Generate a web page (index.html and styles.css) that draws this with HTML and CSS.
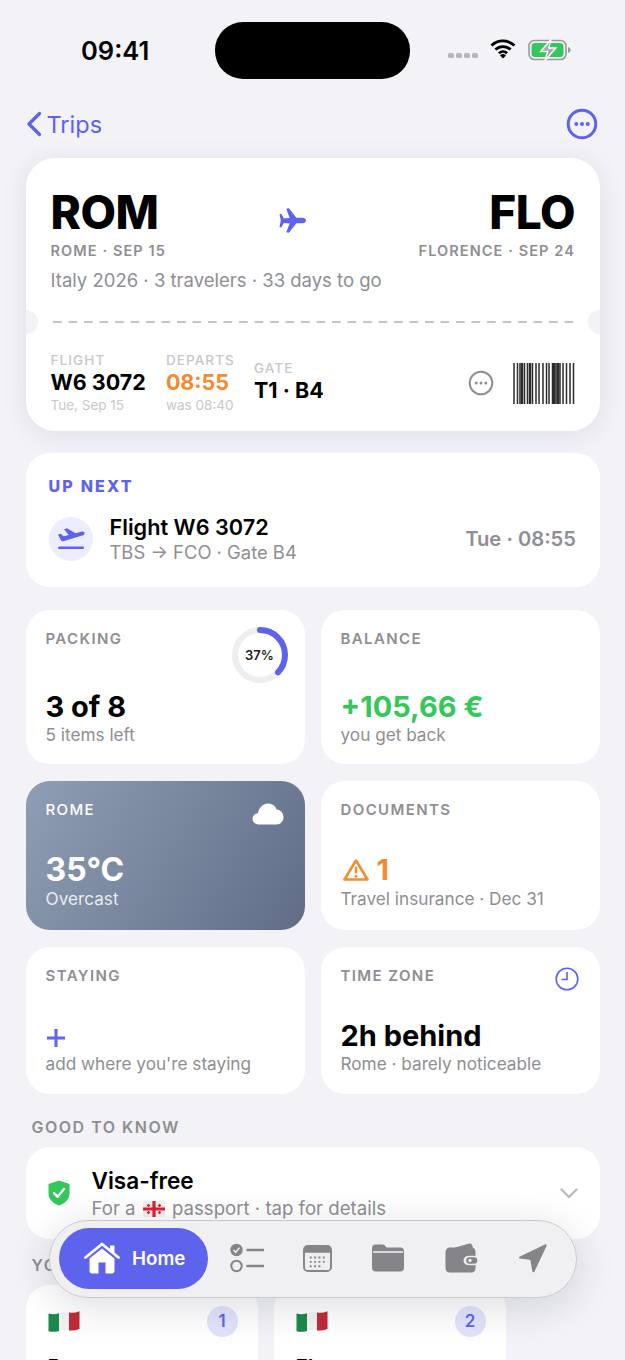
FILE: index.html
```html
<!DOCTYPE html>
<html>
<head>
<title>Italy 2026</title>
<meta name="viewport" content="width=device-width, initial-scale=1.0"/>
<meta charset="UTF-8"/>
<link rel="stylesheet" href="styles.css">
</head>
<body>
<div class="screen">
	<!-- status bar -->
	<div class="statusBar">
		<div class="statusTime">09:41</div>
		<div class="island"></div>
		<div class="statusIcons">
			<div class="signal"><i></i><i></i><i></i><i></i></div>
			<svg class="wifi" width="26" height="20" viewBox="0 0 26 20"><path d="M1.5 6.6a16.5 16.5 0 0 1 23 0M5.4 10.6a11 11 0 0 1 15.2 0M9 14.3a5.8 5.8 0 0 1 8 0" fill="none" stroke="#000" stroke-width="2.8"/><path d="M13 19.6l-3-3.2a4.3 4.3 0 0 1 6 0z" fill="#000"/></svg>
			<svg class="battery" width="43" height="22" viewBox="0 0 43 22"><rect x="1" y="1.5" width="37" height="19" rx="5.5" fill="none" stroke="#9a9a9e" stroke-width="1.6"/><rect x="3.5" y="4" width="32" height="14" rx="3.5" fill="#34c759"/><path d="M40 8v6c1.6-.5 2.6-1.6 2.6-3s-1-2.500-2.600-3z" fill="#9a9a9e"/><path d="M23 0.500L12.500 12.500h7L17 21.500 28 9h-7.200z" fill="#a9adb0" stroke="#fff" stroke-width="1.300"/></svg>
		</div>
	</div>

	<!-- nav -->
	<div class="navBar">
		<div class="navBack">
			<svg width="16" height="26" viewBox="0 0 16 26"><path d="M13.500 2.500L3 13l10.500 10.500" fill="none" stroke="#5e63ee" stroke-width="3.200" stroke-linecap="round" stroke-linejoin="round"/></svg>
			<span>Trips</span>
		</div>
		<svg class="navMore" width="32" height="32" viewBox="0 0 32 32"><circle cx="16" cy="16" r="13.800" fill="none" stroke="#5e63ee" stroke-width="3"/><circle cx="10.300" cy="16" r="2" fill="#5e63ee"/><circle cx="16" cy="16" r="2" fill="#5e63ee"/><circle cx="21.700" cy="16" r="2" fill="#5e63ee"/></svg>
	</div>

	<!-- ticket -->
	<div class="ticket">
		<div class="ticketRoute">
			<div class="routeEnd">
				<div class="routeCode">ROM</div>
				<div class="routeCity">ROME · SEP 15</div>
			</div>
			<svg class="routePlane" width="27" height="25" viewBox="0 0 28 26"><path d="M0.500 6.500l1.800-.4 2.700 4.700 6-.3L7.500 0.800 10.300 0.300 18 10.200l6.500-.1c2 0 3.500 1.300 3.500 2.900s-1.500 2.900-3.500 2.900L18 15.800l-7.700 9.900-2.800-.5 3.500-9.200-6-.3-2.700 4.700-1.800-.4L1.800 13z" fill="#5e63ee"/></svg>
			<div class="routeEnd routeEndRight">
				<div class="routeCode">FLO</div>
				<div class="routeCity">FLORENCE · SEP 24</div>
			</div>
		</div>
		<div class="ticketMeta">Italy 2026 · 3 travelers · 33 days to go</div>
		<div class="ticketTear"></div>
		<div class="ticketInfo">
			<div class="infoCol">
				<div class="infoLabel">FLIGHT</div>
				<div class="infoValue">W6 3072</div>
				<div class="infoNote">Tue, Sep 15</div>
			</div>
			<div class="infoCol">
				<div class="infoLabel">DEPARTS</div>
				<div class="infoValue infoValueLate">08:55</div>
				<div class="infoNote">was 08:40</div>
			</div>
			<div class="infoCol infoColGate">
				<div class="infoLabel">GATE</div>
				<div class="infoValue">T1 · B4</div>
			</div>
			<svg class="infoMore" width="26" height="26" viewBox="0 0 26 26"><circle cx="13" cy="13" r="11.300" fill="none" stroke="#8e8e93" stroke-width="2"/><circle cx="8.200" cy="13" r="1.500" fill="#8e8e93"/><circle cx="13" cy="13" r="1.500" fill="#8e8e93"/><circle cx="17.800" cy="13" r="1.500" fill="#8e8e93"/></svg>
			<svg class="barcode" width="62" height="41" viewBox="0 0 62 41"><path d="M1 0v41M4.500 0v41M7 0v41M11.500 0v41M14.500 0v41M19.500 0v41M23 0v41M26 0v41M30 0v41M33.500 0v41M36 0v41M39.500 0v41M43 0v41M47 0v41M50 0v41M53.500 0v41M57 0v41M60.500 0v41" fill="none" stroke="#2c2c2e" stroke-width="1.500"/><path d="M9 0v41M17 0v41M41 0v41M45 0v41" fill="none" stroke="#2c2c2e" stroke-width="2.500"/></svg>
		</div>
	</div>

	<!-- up next -->
	<div class="card upNext">
		<div class="upNextLabel">UP NEXT</div>
		<div class="upNextRow">
			<div class="upNextIcon">
				<svg width="28" height="24" viewBox="0 0 28 24"><path d="M1 7.500l2.700-.8 3 2.600 5-1.300L7 2.200 10 1.300l8.500 5 5.700-1.600c1.600-.4 3 .2 3.300 1.300.3 1.100-.6 2.100-2.200 2.600L6.300 14.200c-.9.200-1.700 0-2.300-.7z" fill="#5e63ee"/><rect x="1" y="19.500" width="26" height="2.500" rx="1.200" fill="#5e63ee"/></svg>
			</div>
			<div class="upNextText">
				<div class="upNextTitle">Flight W6 3072</div>
				<div class="upNextSub">TBS → FCO · Gate B4</div>
			</div>
			<div class="upNextTime">Tue · 08:55</div>
		</div>
	</div>

	<!-- tiles -->
	<div class="tiles">
		<div class="card tile tileTall">
			<div class="tileLabel">PACKING</div>
			<div class="tileRing">
				<svg width="58" height="58" viewBox="0 0 58 58"><circle cx="29" cy="29" r="25" fill="none" stroke="#eeeeef" stroke-width="6"/><circle cx="29" cy="29" r="25" fill="none" stroke="#5e63ee" stroke-width="6" stroke-linecap="round" stroke-dasharray="58.100 157.100" transform="rotate(-90 29 29)"/></svg>
				<span>37%</span>
			</div>
			<div class="tileValue">3 of 8</div>
			<div class="tileSub">5 items left</div>
		</div>
		<div class="card tile tileTall">
			<div class="tileLabel">BALANCE</div>
			<div class="tileValue tileValueGreen">+105,66 €</div>
			<div class="tileSub">you get back</div>
		</div>
		<div class="tile tileFlat tileWeather">
			<div class="tileLabel">ROME</div>
			<svg class="tileCorner" width="32" height="22" viewBox="0 0 32 22"><path d="M7 21.500C3 21.500 0.500 19 0.500 15.800c0-3 2.200-5.300 5.300-5.600C7 4.500 11.300 0.500 16 0.500c4 0 7.300 2.300 8.700 6C29 7 31.500 10.300 31.500 14.300c0 4-3 7.200-7 7.200z" fill="#fff"/></svg>
			<div class="tileValue">35°C</div>
			<div class="tileSub">Overcast</div>
		</div>
		<div class="card tile tileFlat">
			<div class="tileLabel">DOCUMENTS</div>
			<div class="tileValue tileValueOrange">
				<svg width="26" height="24" viewBox="0 0 26 24"><path d="M13 2.500L24.500 21.500h-23z" fill="none" stroke="#f58a2e" stroke-width="2.600" stroke-linejoin="round"/><rect x="11.800" y="8.500" width="2.400" height="7" rx="1.200" fill="#f58a2e"/><circle cx="13" cy="18.200" r="1.500" fill="#f58a2e"/></svg>
				<span>1</span>
			</div>
			<div class="tileSub">Travel insurance · Dec 31</div>
		</div>
		<div class="card tile">
			<div class="tileLabel">STAYING</div>
			<svg class="tilePlus" width="20" height="20" viewBox="0 0 20 20"><path d="M10 1v18M1 10h18" fill="none" stroke="#5e63ee" stroke-width="3"/></svg>
			<div class="tileSub">add where you're staying</div>
		</div>
		<div class="card tile">
			<div class="tileLabel">TIME ZONE</div>
			<svg class="tileCorner tileClock" width="24" height="24" viewBox="0 0 24 24"><circle cx="12" cy="12" r="10.800" fill="none" stroke="#5e63ee" stroke-width="1.600"/><path d="M12 5v7.500H6.500" fill="none" stroke="#5e63ee" stroke-width="1.600"/></svg>
			<div class="tileValue">2h behind</div>
			<div class="tileSub">Rome · barely noticeable</div>
		</div>
	</div>

	<!-- good to know -->
	<div class="sectionLabel">GOOD TO KNOW</div>
	<div class="card visa">
		<svg width="22" height="26" viewBox="0 0 22 26"><path d="M11 0.500L21.500 4v9.500c0 5.500-4.300 9.800-10.500 12C4.800 23.300 0.500 19 0.500 13.500V4z" fill="#34c759"/><path d="M6 13l3.600 3.800L16 9" fill="none" stroke="#fff" stroke-width="2.400" stroke-linecap="round" stroke-linejoin="round"/></svg>
		<div class="visaText">
			<div class="visaTitle">Visa-free</div>
			<div class="visaSub">For a
				<svg class="visaFlag" width="22" height="16" viewBox="0 0 22 16"><rect width="22" height="16" rx="2" fill="#f4f0f0"/><path d="M11 0v16M0 8h22" stroke="#d8232f" stroke-width="3.200"/><path d="M5.500 3v3M4 4.500h3M16.500 3v3M15 4.500h3M5.500 10v3M4 11.500h3M16.500 10v3M15 11.500h3" stroke="#d8232f" stroke-width="1.300"/></svg>
				passport · tap for details</div>
		</div>
		<svg class="visaChevron" width="18" height="11" viewBox="0 0 18 11"><path d="M1.500 1.500L9 9l7.500-7.500" fill="none" stroke="#b9b9bd" stroke-width="2.200" stroke-linecap="round" stroke-linejoin="round"/></svg>
	</div>

	<!-- stops -->
	<div class="sectionLabel sectionLabelStops">YOUR STOPS</div>
	<div class="stops">
		<div class="card stop">
			<div class="stopTop">
				<svg class="stopFlag" width="32" height="24" viewBox="0 0 32 24"><path d="M0.500 3.500c3.500 1 7 .8 10.500-.3V21c-3.500 1-7 1.200-10.500.3z" fill="#1c8a4c"/><path d="M11 3.200c3.300-1 6.800-1.200 10-.6V20.400c-3.200-.6-6.700-.4-10 .6z" fill="#f3f3f3"/><path d="M21 2.600c3.500.6 7 .1 10.500-1.300V19c-3.500 1.400-7 1.900-10.500 1.400z" fill="#c22a37"/></svg>
				<div class="stopBadge">1</div>
			</div>
			<div class="stopName">Rome</div>
		</div>
		<div class="card stop">
			<div class="stopTop">
				<svg class="stopFlag" width="32" height="24" viewBox="0 0 32 24"><path d="M0.500 3.500c3.500 1 7 .8 10.500-.3V21c-3.500 1-7 1.200-10.500.3z" fill="#1c8a4c"/><path d="M11 3.200c3.300-1 6.800-1.200 10-.6V20.400c-3.200-.6-6.700-.4-10 .6z" fill="#f3f3f3"/><path d="M21 2.600c3.500.6 7 .1 10.500-1.300V19c-3.500 1.400-7 1.900-10.500 1.400z" fill="#c22a37"/></svg>
				<div class="stopBadge">2</div>
			</div>
			<div class="stopName">Florence</div>
		</div>
	</div>

	<!-- floating tab bar -->
	<div class="tabBar">
		<div class="tabHome">
			<svg width="36" height="32" viewBox="0 0 36 32"><path d="M1.500 15.500L18 2l16.500 13.500" fill="none" stroke="#fff" stroke-width="2.800" stroke-linecap="round" stroke-linejoin="round"/><path d="M26 3.500h4.500v7.500L26 7.500z" fill="#fff"/><path d="M5.500 16.500L18 6.500l12.500 10V29c0 1.300-1 2.500-2.500 2.500h-6.500V20.500h-7v11H8c-1.500 0-2.500-1.200-2.500-2.500z" fill="#fff"/></svg>
			<span>Home</span>
		</div>
		<svg width="34" height="30" viewBox="0 0 34 30"><circle cx="6.500" cy="7" r="6.200" fill="#848489"/><path d="M3.600 7l2.100 2.300L9.500 4.600" fill="none" stroke="#f1f1f3" stroke-width="1.500"/><circle cx="6.500" cy="23" r="5.200" fill="none" stroke="#848489" stroke-width="2"/><path d="M17.500 7h16M17.500 23h16" stroke="#848489" stroke-width="2.600" stroke-linecap="round"/></svg>
		<svg width="29" height="27" viewBox="0 0 30 28"><rect x="1" y="1" width="28" height="26" rx="4" fill="#eeeef0" stroke="#848489" stroke-width="2"/><path d="M1 5a4 4 0 0 1 4-4h20a4 4 0 0 1 4 4v3H1z" fill="#848489"/><path d="M7 13h16M7 17.500h16M7 22h11" stroke="#848489" stroke-width="2" stroke-dasharray="2 2.500"/></svg>
		<svg width="34" height="28" viewBox="0 0 34 28"><path d="M1 4c0-2 1.500-3.500 3.500-3.500h7c1.500 0 2.300.7 3.300 2l.7 1H29.500C31.500 3.500 33 5 33 7v17c0 2-1.500 3.500-3.500 3.500H4.500C2.500 27.500 1 26 1 24z" fill="#848489"/><path d="M2 8h30" stroke="#eeeef0" stroke-width="1.600"/></svg>
		<svg width="35" height="30" viewBox="0 0 34 30"><path d="M9 5L25 0.500c1.300-.3 2.200.5 2.500 1.500L28.500 5z" fill="#848489"/><path d="M1 9c0-2.500 1.800-4.500 4.500-4.500H27c2.500 0 4 1.800 4 4V13h-7.500a4.500 4.500 0 0 0 0 9H31v3.500c0 2.300-1.700 4-4 4H5c-2.300 0-4-1.700-4-4z" fill="#848489"/><rect x="21" y="13.500" width="12.500" height="8" rx="4" fill="#848489" stroke="#eeeef0" stroke-width="1.400"/><circle cx="25.500" cy="17.500" r="1.700" fill="#eeeef0"/></svg>
		<svg width="30" height="30" viewBox="0 0 30 30"><path d="M1.500 13.800L27 1.500c1-.5 1.900.4 1.500 1.400L16.500 28.500c-.5 1-2 .9-2.200-.2l-1.800-10.600c-.1-.5-.4-.8-.9-.9L1.700 15.400c-.9-.2-1-1.200-.2-1.600z" fill="#848489"/></svg>
	</div>
</div>
</body>
</html>
```

FILE: styles.css
```css
html, body
{
	margin: 0;
	padding: 0;
	background-color: #f2f2f7;
}

body
{
	font-family: Inter, "Liberation Sans", sans-serif;
	color: #000;
}

.screen
{
	position: relative;
	width: 625px;
	height: 1360px;
	overflow: hidden;
	padding: 0 25px 0 25.500px;
	box-sizing: border-box;
}

/* status bar */
.statusBar
{
	display: flex;
	align-items: flex-start;
	height: 100px;
	margin: 0 -25px 0 -25.500px;
	padding-top: 22px;
	box-sizing: border-box;
}

.statusTime
{
	width: 134px;
	margin-left: 81px;
	margin-top: 12px;
	font-size: 25.500px;
	line-height: 34px;
	font-weight: 600;
}

.island
{
	width: 195px;
	height: 57px;
	background-color: #000;
	border-radius: 28px;
}

.statusIcons
{
	display: flex;
	align-items: center;
	margin-left: 38px;
	margin-top: 17px;
}

.signal
{
	display: flex;
	gap: 2.500px;
	margin-top: 11px;
	margin-right: 12px;
}

.signal i
{
	width: 5.500px;
	height: 5.500px;
	background-color: #b9b9bd;
	border-radius: 1.500px;
}

.wifi
{
	margin-right: 12px;
	margin-top: -2px;
}

/* nav */
.navBar
{
	display: flex;
	justify-content: space-between;
	align-items: center;
	height: 48px;
	margin-bottom: 10px;
}

.navBack
{
	display: flex;
	align-items: center;
	gap: 5px;
	color: #5e63ee;
	font-size: 23.500px;
}

.navMore
{
	margin-right: 2px;
}

/* ticket */
.ticket
{
	position: relative;
	height: 273px;
	padding: 28px 25px 0;
	box-sizing: border-box;
	background-color: #fff;
	border-radius: 29px;
	box-shadow: 0 4px 26px rgba(60,60,110,0.10);
}

.ticket:before, .ticket:after
{
	content: "";
	position: absolute;
	top: 152px;
	width: 12px;
	height: 24px;
	background-color: #f2f2f7;
}

.ticket:before
{
	left: 0;
	border-radius: 0 12px 12px 0;
}

.ticket:after
{
	right: 0;
	border-radius: 12px 0 0 12px;
}

.ticketRoute
{
	display: flex;
	justify-content: space-between;
	align-items: flex-start;
}

.routeEndRight
{
	text-align: right;
}

.routeCode
{
	font-size: 46px;
	line-height: 52px;
	font-weight: 800;
	letter-spacing: -0.5px;
}

.routeCity
{
	margin-top: 3px;
	font-size: 14.500px;
	line-height: 20px;
	font-weight: 600;
	letter-spacing: 1.100px;
	color: #8e8e93;
}

.routePlane
{
	margin-top: 22px;
}

.ticketMeta
{
	margin-top: 7px;
	font-size: 18.500px;
	line-height: 24px;
	color: #8e8e93;
}

.ticketTear
{
	height: 0;
	margin-top: 29px;
	margin-left: 2px;
	background-image: linear-gradient(to right, #c4c4c8 9px, transparent 9px);
	background-size: 15.500px 2px;
	background-repeat: repeat-x;
	padding-top: 2px;
}

.ticketInfo
{
	display: flex;
	align-items: center;
	margin-top: 29px;
}

.infoCol
{
	margin-right: 20px;
}

.infoColGate
{
	margin-top: 8px;
	margin-left: -1px;
	align-self: flex-start;
}

.infoLabel
{
	font-size: 13.500px;
	line-height: 16px;
	font-weight: 500;
	letter-spacing: 1.100px;
	color: #c7c7cc;
}

.infoValue
{
	font-size: 21.500px;
	line-height: 28px;
	font-weight: 700;
}

.infoValueLate
{
	color: #f58a2e;
}

.infoNote
{
	font-size: 13.500px;
	line-height: 18px;
	color: #c7c7cc;
}

.infoMore
{
	margin-left: auto;
	margin-right: 19px;
}

/* cards */
.card
{
	background-color: #fff;
	border-radius: 24px;
}

.upNext
{
	height: 134px;
	margin-top: 22px;
	padding: 23px 24px 0 23px;
	box-sizing: border-box;
}

.upNextLabel
{
	font-size: 16px;
	line-height: 20px;
	font-weight: 800;
	letter-spacing: 2.200px;
	color: #5e63ee;
}

.upNextRow
{
	display: flex;
	align-items: center;
	margin-top: 17px;
}

.upNextIcon
{
	display: flex;
	justify-content: center;
	align-items: center;
	width: 44px;
	height: 44px;
	background-color: #eceefd;
	border-radius: 50%;
}

.upNextText
{
	margin-left: 17px;
}

.upNextTitle
{
	font-size: 21.700px;
	line-height: 28px;
	font-weight: 600;
}

.upNextSub
{
	font-size: 18.400px;
	line-height: 23px;
	color: #8e8e93;
}

.upNextTime
{
	margin-left: auto;
	font-size: 20.200px;
	font-weight: 600;
	color: #8e8e93;
}

/* tiles */
.tiles
{
	display: grid;
	grid-template-columns: 279px 279px;
	grid-template-rows: 154px 149px 147px;
	column-gap: 16px;
	row-gap: 17px;
	margin-top: 23px;
}

.tile
{
	position: relative;
	display: flex;
	flex-direction: column;
	padding: 19px 19px 0 20px;
	box-sizing: border-box;
}

.tileLabel
{
	font-size: 15px;
	line-height: 19px;
	font-weight: 600;
	letter-spacing: 1.400px;
	color: #8e8e93;
}

.tileValue
{
	margin-top: auto;
	font-size: 29px;
	line-height: 34px;
	font-weight: 700;
}

.tileValueGreen
{
	color: #34c759;
}

.tileValueOrange
{
	display: flex;
	align-items: center;
	gap: 8px;
	margin-left: 2px;
	color: #f58a2e;
}

.tileSub
{
	margin-bottom: 19px;
	font-size: 17.200px;
	line-height: 22px;
	color: #8e8e93;
}

.tileTall .tileSub
{
	margin-bottom: 18px;
}

.tileFlat .tileSub
{
	margin-bottom: 20px;
}

.tileFlat .tileValue
{
	line-height: 36px;
}

.tileRing
{
	position: absolute;
	top: 16px;
	right: 16px;
	width: 58px;
	height: 58px;
}

.tileRing span
{
	position: absolute;
	top: 0;
	left: 0;
	width: 58px;
	font-size: 13px;
	line-height: 58px;
	font-weight: 600;
	text-align: center;
	color: #1c1c1e;
}

.tileWeather
{
	background-image: linear-gradient(120deg, #8f9eb4, #616d87);
	border-radius: 24px;
}

.tileWeather .tileLabel, .tileWeather .tileValue
{
	color: #fff;
}

.tileWeather .tileLabel
{
	font-weight: 500;
}

.tileWeather .tileValue
{
	font-size: 32px;
}

.tileWeather .tileSub
{
	color: rgba(255,255,255,0.85);
}

.tileCorner
{
	position: absolute;
	top: 22px;
	right: 21px;
}

.tileClock
{
	top: 20px;
}

.tilePlus
{
	margin-top: auto;
	margin-bottom: 5px;
}

/* sections */
.sectionLabel
{
	margin-top: 23px;
	margin-left: 6px;
	font-size: 16px;
	line-height: 20px;
	font-weight: 600;
	letter-spacing: 1.500px;
	color: #8e8e93;
}

.visa
{
	display: flex;
	align-items: center;
	height: 92px;
	margin-top: 10px;
	padding: 0 22px;
	box-sizing: border-box;
}

.visaText
{
	margin-left: 22px;
}

.visaTitle
{
	font-size: 22.600px;
	line-height: 30px;
	font-weight: 600;
}

.visaSub
{
	font-size: 18.600px;
	line-height: 24px;
	color: #8e8e93;
}

.visaFlag
{
	vertical-align: -2px;
	margin: 0 2px;
}

.visaChevron
{
	margin-left: auto;
}

.sectionLabelStops
{
	margin-top: 16px;
}

.stops
{
	display: flex;
	gap: 16px;
	margin-top: 10px;
}

.stop
{
	width: 232px;
	height: 120px;
	padding: 21px 20px 0 22px;
	box-sizing: border-box;
}

.stopTop
{
	display: flex;
	justify-content: space-between;
	align-items: center;
}

.stopBadge
{
	width: 31px;
	height: 31px;
	background-color: #e2e3fb;
	border-radius: 50%;
	font-size: 17px;
	line-height: 31px;
	font-weight: 600;
	text-align: center;
	color: #5e63ee;
}

.stopName
{
	margin-top: 18px;
	font-size: 21px;
	font-weight: 600;
}

/* floating tab bar */
.tabBar
{
	position: absolute;
	left: 49px;
	top: 1220px;
	display: flex;
	align-items: center;
	gap: 39px;
	width: 528px;
	height: 78px;
	padding: 0 0 2px 9px;
	box-sizing: border-box;
	background-color: rgba(239,239,241,0.94);
	border: 1px solid #c9c9cb;
	border-radius: 39px;
	box-shadow: 0 8px 40px rgba(40,40,70,0.16);
	backdrop-filter: blur(8px);
}

.tabHome
{
	display: flex;
	align-items: center;
	gap: 12px;
	width: 149px;
	height: 61px;
	margin-right: -17px;
	padding-left: 25px;
	box-sizing: border-box;
	background-color: #5e63ee;
	border-radius: 31px;
	color: #fff;
	font-size: 18.800px;
	font-weight: 600;
}
```
